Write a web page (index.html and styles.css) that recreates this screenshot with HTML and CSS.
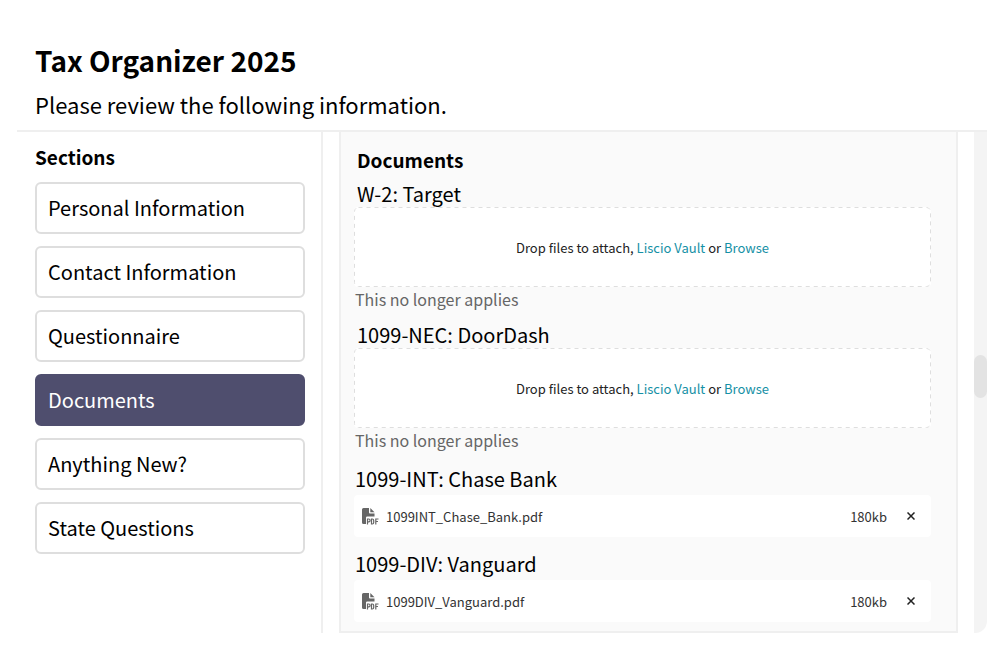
FILE: index.html
```html
<!DOCTYPE html>
<html lang="en">

<head>
    <meta charset="UTF-8">
    <meta name="viewport" content="width=device-width, initial-scale=1.0">
    <title>Tax Organizer 2025</title>
    <link rel="stylesheet" href="styles.css">
</head>

<body>
    <!-- PDF icon, used by every attached file -->
    <svg class="sprite" aria-hidden="true">
        <symbol id="pdf" viewBox="0 0 17 17">
            <path fill="#666" d="M1.500 0H7v4.500a1 1 0 0 0 1 1h4.500V8.500H5.200A1.200 1.200 0 0 0 4 9.700V16H1.500A1.500 1.500 0 0 1 0 14.500v-13A1.500 1.500 0 0 1 1.500 0z" />
            <path fill="#666" d="M8.300 0l4.200 4.200H8.300z" />
            <g fill="none" stroke="#666" stroke-width="1.200">
                <path d="M5.500 16.500v-5.500h1.200a1.300 1.300 0 0 1 0 2.800H5.500" />
                <path d="M9.500 11v5h.8q1.400 0 1.400-1.500v-2q0-1.500-1.400-1.500z" />
                <path d="M16.500 11h-2.700v5.500M13.800 13.500h2.200" />
            </g>
        </symbol>
    </svg>

    <div class="container">
        <header class="header">
            <h1>Tax Organizer 2025</h1>
            <p>Please review the following information.</p>
        </header>

        <div class="content">
            <nav class="sidebar">
                <h2>Sections</h2>
                <button type="button" class="section">Personal Information</button>
                <button type="button" class="section">Contact Information</button>
                <button type="button" class="section">Questionnaire</button>
                <button type="button" class="section active">Documents</button>
                <button type="button" class="section">Anything New?</button>
                <button type="button" class="section">State Questions</button>
            </nav>

            <main class="panel">
                <h2>Documents</h2>

                <div class="item">
                    <h3>W-2: Target</h3>
                    <div class="dropzone">
                        <svg class="outline" aria-hidden="true"><rect x="0.5" y="0.5" rx="4" /></svg>
                        <p>Drop files to attach, <a href="#">Liscio Vault</a> or <a href="#">Browse</a></p>
                    </div>
                    <p class="note">This no longer applies</p>
                </div>

                <div class="item">
                    <h3>1099-NEC: DoorDash</h3>
                    <div class="dropzone">
                        <svg class="outline" aria-hidden="true"><rect x="0.5" y="0.5" rx="4" /></svg>
                        <p>Drop files to attach, <a href="#">Liscio Vault</a> or <a href="#">Browse</a></p>
                    </div>
                    <p class="note">This no longer applies</p>
                </div>

                <div class="item attached">
                    <h3>1099-INT: Chase Bank</h3>
                    <div class="file">
                        <svg class="file-icon" aria-hidden="true"><use href="#pdf" /></svg>
                        <span class="file-name">1099INT_Chase_Bank.pdf</span>
                        <span>180kb</span>
                        <button type="button" class="remove" aria-label="Remove file">
                            <svg viewBox="0 0 8 8" aria-hidden="true"><path d="M.5.5l7 7M7.500.5l-7 7" /></svg>
                        </button>
                    </div>
                </div>

                <div class="item attached">
                    <h3>1099-DIV: Vanguard</h3>
                    <div class="file">
                        <svg class="file-icon" aria-hidden="true"><use href="#pdf" /></svg>
                        <span class="file-name">1099DIV_Vanguard.pdf</span>
                        <span>180kb</span>
                        <button type="button" class="remove" aria-label="Remove file">
                            <svg viewBox="0 0 8 8" aria-hidden="true"><path d="M.5.5l7 7M7.500.5l-7 7" /></svg>
                        </button>
                    </div>
                </div>
            </main>

            <div class="scroll-track">
                <div class="scroll-thumb"></div>
            </div>
        </div>
    </div>
</body>

</html>
```
FILE: styles.css
```css
* {
    box-sizing: border-box;
}

body {
    margin: 0;
    background-color: #fff;
    color: #000;
    font-family: "Noto Sans CJK SC", sans-serif;
    font-size: 20px;
}

h1,
h2,
h3,
p {
    margin: 0;
}

a {
    color: #1590a5;
    text-decoration: none;
}

.sprite {
    display: none;
}

.container {
    padding: 38px 19px 22px 17px;
}

/* Header */
.header {
    padding: 0 18px 4px;
    border-bottom: 2px solid #efefef;
}

.header h1 {
    font-size: 28px;
    font-weight: 700;
    line-height: 44px;
}

.header p {
    font-size: 22px;
    line-height: 44px;
}

.content {
    display: flex;
    gap: 16px;
}

h2 {
    font-size: 19px;
    font-weight: 700;
    line-height: 30px;
}

/* Left menu */
.sidebar {
    display: flex;
    flex-direction: column;
    gap: 12px;
    width: 306px;
    flex-shrink: 0;
    padding: 10px 16px 0 18px;
    border-right: 2px solid #efefef;
}

.sidebar h2 {
    margin-bottom: -2px;
}

.section {
    height: 52px;
    padding: 0 11px 2px;
    border: 2px solid #dedede;
    border-radius: 6px;
    background-color: #fff;
    color: #000;
    font-family: inherit;
    font-size: 20px;
    text-align: left;
    cursor: pointer;
}

.section.active {
    border-color: #4f4e6e;
    background-color: #4f4e6e;
    color: #fff;
}

/* Documents panel */
.panel {
    flex: 1;
    display: flex;
    flex-direction: column;
    gap: 11px;
    padding: 13px 25px 9px 13px;
    border: 2px solid #efefef;
    border-top: 0;
    background-color: #fafafa;
}

.panel h2 {
    margin-bottom: -5px;
    padding-left: 3px;
}

.item h3 {
    padding-left: 3px;
    font-size: 20px;
    font-weight: 400;
    line-height: 26px;
}

.attached h3 {
    padding-left: 1px;
    line-height: 32px;
}

.dropzone {
    position: relative;
    display: flex;
    align-items: center;
    justify-content: center;
    height: 80px;
    border-radius: 4px;
    background-color: #fff;
    color: #222;
    font-size: 13px;
}

/* dashed border with longer dashes than border-style gives */
.outline {
    position: absolute;
    inset: 0;
    width: 100%;
    height: 100%;
    pointer-events: none;
}

.outline rect {
    width: calc(100% - 1px);
    height: calc(100% - 1px);
    fill: none;
    stroke: #dedede;
    stroke-dasharray: 4 4;
}

.note {
    padding-left: 1px;
    color: #666;
    font-size: 16px;
    line-height: 24px;
}

.file {
    display: flex;
    align-items: center;
    height: 42px;
    padding: 0 8px;
    border-radius: 4px;
    background-color: #fff;
    color: #333;
    font-size: 13px;
}

.file-icon {
    width: 17px;
    height: 17px;
}

.file-name {
    flex: 1;
    padding-left: 7px;
}

.remove {
    display: flex;
    margin-left: 12px;
    padding: 8px;
    border: 0;
    background: none;
    cursor: pointer;
}

.remove svg {
    width: 8px;
    height: 8px;
    fill: none;
    stroke: #222;
    stroke-width: 1.5;
}

/* Scrollbar */
.scroll-track {
    display: flex;
    align-items: center;
    width: 13px;
    padding-bottom: 12px;
    border-bottom-right-radius: 12px;
    background-color: #f4f4f4;
}

.scroll-thumb {
    width: 13px;
    height: 43px;
    border-radius: 7px;
    background-color: #e3e3e3;
}
```
